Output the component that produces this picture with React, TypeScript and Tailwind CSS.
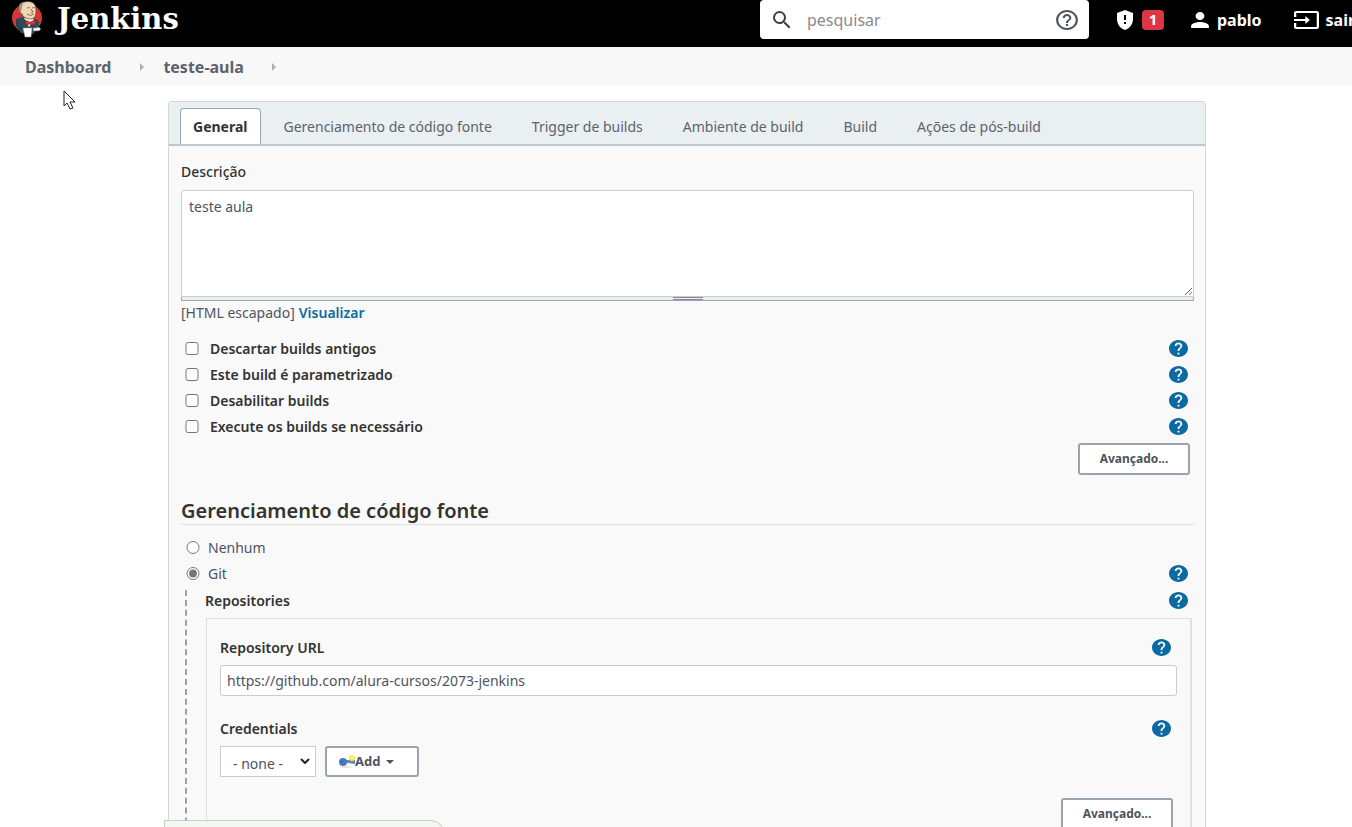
import { useState } from "react";
import {
  MdGppMaybe,
  MdHelp,
  MdHelpOutline,
  MdInput,
  MdPerson,
  MdSearch,
} from "react-icons/md";

const tabs = [
  "Gerenciamento de código fonte",
  "Trigger de builds",
  "Ambiente de build",
  "Build",
  "Ações de pós-build",
];

const options = [
  "Descartar builds antigos",
  "Este build é parametrizado",
  "Desabilitar builds",
  "Execute os builds se necessário",
];

const JenkinsLogo = () => (
  <svg viewBox="0 0 32 38" className="w-8 h-[38px] shrink-0" aria-hidden="true">
    <ellipse cx="16" cy="18" rx="15" ry="14" fill="#d33833" />
    <path d="M5 19l6-2 14 2 3 3v6l-6 6-12-1-5-7z" fill="#2c4a5a" />
    <path d="M13 18l5 9 5-8z" fill="#fff" />
    <path
      d="M8 8C8 4 12 1.500 17 1.500c6 0 8 4 8 8 0 5 0 9-5 9.500-5 0-8-2-9-5-2-1-3-3-3-6z"
      fill="#f0d6b7"
      stroke="#3b2b24"
      strokeWidth="0.6"
    />
    <path d="M8 10C7 5 9 2 14 2c-2 1-3 3-3 5l-1 5-1 1z" fill="#9b9186" />
    <path
      d="M16 8q2-1 3 0M21 8q2-1 3 0M20 9l2 3-2 1M16 14q3 3 7 0"
      fill="none"
      stroke="#6a5646"
      strokeWidth="0.8"
    />
    <path d="M14 20l5 2 5-2v5l-5-1-4 1z" fill="#d33833" stroke="#81201c" strokeWidth="0.5" />
    <path d="M6 22q0 6 7 7" fill="none" stroke="#1d2f3a" strokeWidth="1" />
    <path d="M12 28l9 0-1 9h-6z" fill="#fff" stroke="#999" strokeWidth="0.5" />
    <path d="M22 28l6-1 2 2-2 2-6 0z" fill="#f3f3f3" stroke="#335061" strokeWidth="0.6" />
  </svg>
);

const KeyIcon = () => (
  <svg viewBox="0 0 16 14" className="w-4 h-3.5" aria-hidden="true">
    <ellipse cx="7" cy="12" rx="6" ry="1" fill="#e5e5e5" />
    <path d="M5 5h11v4h-2l-1-1-1 1-1-1H6z" fill="#5b8ac4" />
    <circle cx="4" cy="7" r="4" fill="#4a7ab8" />
    <circle cx="3" cy="7" r="1" fill="#3a6aa8" />
    <circle cx="13" cy="3" r="3" fill="#fbec4b" />
    <circle cx="13" cy="3" r="1" fill="#fffbc0" />
  </svg>
);

const HelpButton = ({ label }: { label: string }) => (
  <button type="button" aria-label={`Ajuda: ${label}`} className="text-[#0b6aa2]">
    <MdHelp preserveAspectRatio="none" viewBox="2 2 20 20" className="w-[19px] h-[17px]" />
  </button>
);

const AdvancedButton = () => (
  <button
    type="button"
    className="h-8 w-28 rounded-[3px] border-2 border-[#98a5b0] bg-white text-[12px] font-bold text-[#4d545d]"
  >
    Avançado...
  </button>
);

const Header = () => (
  <header className="flex h-[47px] items-start bg-black text-white">
    <a href="#" className="ml-[11px] flex h-[38px] items-center gap-3.5">
      <JenkinsLogo />
      <span className="font-['DejaVu_Serif',serif] text-[29px] font-bold leading-[36px]">
        Jenkins
      </span>
    </a>
    <div className="ml-auto flex h-[39px] w-[329px] shrink-0 items-center rounded bg-white pl-2.5 pr-2.5">
      <MdSearch className="size-6 text-[#404040]" />
      <input
        type="text"
        aria-label="pesquisar"
        placeholder="pesquisar"
        className="ml-[13px] min-w-0 flex-1 text-[16px] text-[#333] outline-none placeholder:text-[#8a8a8a]"
      />
      <button type="button" aria-label="Ajuda" className="text-[#4d545d]">
        <MdHelpOutline preserveAspectRatio="none" viewBox="1 1 22 22" className="h-[22px] w-6" />
      </button>
    </div>
    <nav className="flex h-[39px] w-[263px] shrink-0 items-center overflow-hidden whitespace-nowrap pl-6 text-[16px] font-bold">
      <button type="button" className="flex items-center gap-[5px]" aria-label="Alertas">
        <MdGppMaybe className="size-6" />
        <span className="flex h-5 w-[22px] items-center justify-center rounded bg-[#dc3545] text-[15px]">
          1
        </span>
      </button>
      <a href="#" className="ml-[26px] flex shrink-0 items-center gap-[7px]">
        <MdPerson preserveAspectRatio="none" viewBox="3 3 18 18" className="h-[18px] w-5" />
        pablo
      </a>
      <a href="#" className="ml-8 flex shrink-0 items-center gap-[7px]">
        <MdInput preserveAspectRatio="none" viewBox="1 3 22 18" className="h-[18px] w-[25px]" />
        sair
      </a>
    </nav>
  </header>
);

const Crumb = () => (
  <svg viewBox="0 0 4 8" className="h-2 w-1" aria-hidden="true">
    <path d="M0 0l4 4-4 4z" fill="#b0b0b0" />
  </svg>
);

const Breadcrumbs = () => (
  <nav className="flex h-[39px] items-center bg-[#f8f8f8] pl-[25px] text-[16px] font-bold text-[#5c636b]">
    <a href="#" className="mr-[29px]">
      Dashboard
    </a>
    <Crumb />
    <a href="#" className="ml-[19px] mr-7">
      teste-aula
    </a>
    <Crumb />
  </nav>
);

const Repository = () => {
  const [url, setUrl] = useState("https://github.com/alura-cursos/2073-jenkins");

  return (
    <div className="ml-[19px] mr-0.5 mt-2 border border-r-2 border-[#e0e0e0] px-[13px] pb-8 pt-[15px]">
      <div className="flex h-[26px] items-center justify-between pr-1.5 font-semibold">
        <label htmlFor="url">Repository URL</label>
        <HelpButton label="Repository URL" />
      </div>
      <input
        id="url"
        type="text"
        value={url}
        onChange={(e) => setUrl(e.target.value)}
        className="mt-[5px] block h-[31px] w-full rounded-[3px] border border-[#ccc] bg-white px-1.5 text-[#4d545d]"
      />
      <div className="mt-[19px] flex h-[26px] items-center justify-between pr-1.5 font-semibold">
        <label htmlFor="credentials">Credentials</label>
        <HelpButton label="Credentials" />
      </div>
      <div className="mt-[5px] flex gap-[9px]">
        <div className="relative">
          <select
            id="credentials"
            className="h-[31px] w-24 appearance-none border border-[#ccc] bg-white pl-3 pt-1 text-[#4d545d]"
          >
            <option>- none -</option>
          </select>
          <svg
            viewBox="0 0 10 6"
            className="pointer-events-none absolute right-1.5 top-3 h-1.5 w-2.5"
            aria-hidden="true"
          >
            <path d="M1 1l4 4 4-4" fill="none" stroke="#222" strokeWidth="2" />
          </svg>
        </div>
        <button
          type="button"
          className="flex h-[31px] w-[94px] items-center rounded-[3px] border-2 border-[#98a5b0] bg-white pl-3 text-[13px] font-bold text-[#4d545d]"
        >
          <KeyIcon />
          Add
          <svg viewBox="0 0 8 4" className="ml-1.5 h-1 w-2" aria-hidden="true">
            <path d="M0 0h8L4 4z" fill="#4d545d" />
          </svg>
        </button>
      </div>
      <div className="mt-[21px] flex justify-end pr-1">
        <AdvancedButton />
      </div>
    </div>
  );
};

const App = () => {
  const [scm, setScm] = useState("Git");
  const [description, setDescription] = useState("teste aula");

  return (
    <div className="relative h-screen overflow-hidden bg-white font-['Noto_Sans',sans-serif] text-[14px] text-[#333]">
      <Header />
      <Breadcrumbs />
      <main className="ml-[168px] mr-[146px] mt-[15px] rounded-t-[3px] border border-[#d4d6d8] bg-[#f9f9f9]">
        <div className="flex h-11 items-end gap-10 border-b-2 border-[#bcc8d0] bg-[#eaeff2] pl-[11px] text-[#5c636b]">
          <button
            type="button"
            className="-mr-[17px] h-9 rounded-t border border-b-0 border-[#98a5b0] bg-white px-3 font-bold text-[#333]"
          >
            General
          </button>
          {tabs.map((tab) => (
            <button type="button" key={tab} className="h-9 whitespace-nowrap">
              {tab}
            </button>
          ))}
        </div>

        <form className="pb-10 pl-3 pr-[11px] pt-[11px]">
          <label htmlFor="description" className="flex h-7 items-center font-medium">
            Descrição
          </label>
          <textarea
            id="description"
            value={description}
            onChange={(e) => setDescription(e.target.value)}
            className="mt-[5px] block h-[107px] w-full rounded-t-[3px] border border-[#ccc] bg-white px-[7px] py-[5px] text-[#4d545d]"
          />
          <div className="flex h-1 justify-center border-x border-b border-[#98a5b0] bg-[#eaeff2]">
            <div className="h-[3px] w-[30px] border-y border-[#889]" />
          </div>
          <p className="flex h-[22px] items-center gap-1 text-[#4d545d]">
            [HTML escapado]
            <a href="#" className="font-semibold text-[#0b6aa2]">
              Visualizar
            </a>
          </p>

          <div className="mt-3">
            {options.map((option) => (
              <div key={option} className="flex h-[26px] items-center justify-between pl-1 pr-1.5">
                <label className="flex items-center gap-[11px] font-semibold">
                  <input type="checkbox" className="h-[13px] w-3.5" />
                  {option}
                </label>
                <HelpButton label={option} />
              </div>
            ))}
          </div>
          <div className="mt-1 flex justify-end pr-1">
            <AdvancedButton />
          </div>

          <h2 className="mt-[22px] h-7 border-b border-[#e0e0e0] text-[20px] font-semibold leading-[28px]">
            Gerenciamento de código fonte
          </h2>
          <div className="mt-[9px]">
            {["Nenhum", "Git"].map((name) => (
              <div key={name} className="flex h-[26px] items-center justify-between pl-[5px] pr-1.5">
                <label className="flex items-center gap-2 text-[#4d545d]">
                  <input
                    type="radio"
                    name="scm"
                    checked={scm === name}
                    onChange={() => setScm(name)}
                    className="h-[13px] w-3.5 accent-[#767676]"
                  />
                  {name}
                </label>
                {name === "Git" && <HelpButton label={name} />}
              </div>
            ))}
          </div>
          <div className="ml-1 mt-1 border-l-2 border-dashed border-[#a0a0a0]">
            <div className="flex h-5 items-center justify-between pl-[18px] pr-1.5 font-semibold">
              Repositories
              <HelpButton label="Repositories" />
            </div>
            <Repository />
          </div>
        </form>
      </main>

      {/* status bar over the bottom of the form */}
      <div className="absolute -bottom-6 left-[164px] h-[31px] w-[282px] rounded-tr-2xl border border-[#b5d8c3] bg-[#f4f8f1]" />

      {/* mouse pointer */}
      <svg viewBox="0 0 13 20" className="absolute left-[63px] top-[90px] h-5 w-[13px]" aria-hidden="true">
        <path
          d="M1 1v15l3-3 3 6 3-1-3-6h5z"
          fill="#fff"
          stroke="#222"
          strokeWidth="1"
        />
      </svg>
    </div>
  );
};

export default App;
